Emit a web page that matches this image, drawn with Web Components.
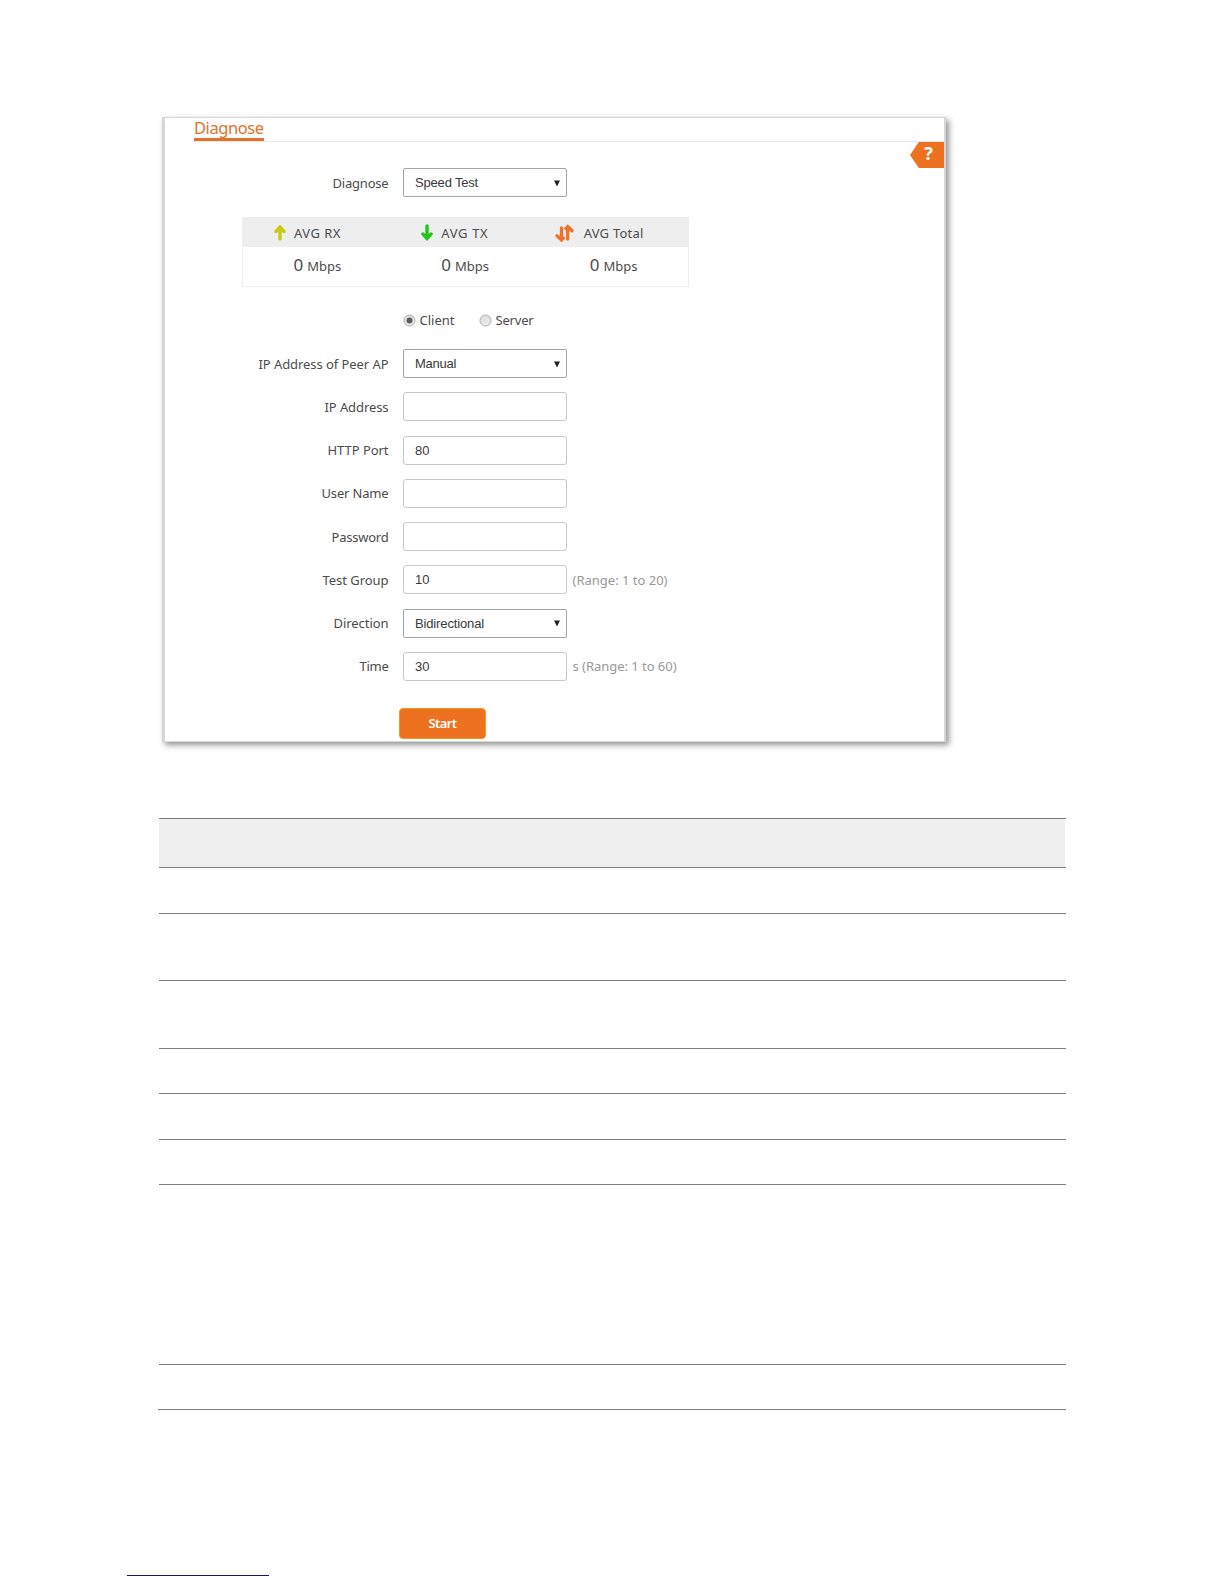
<!DOCTYPE html>
<html lang="en">
<head>
<meta charset="utf-8">
<title>Diagnose</title>
<style>
  body {
    margin: 0;
    height: 1584px;
    overflow: hidden;
    background: #fff;
    color: #4c4c4c;
    font: 13px/20px "Noto Sans", "Open Sans", sans-serif;
  }
</style>
</head>
<body>
<diagnose-page></diagnose-page>

<script>
  function attach(el, html) {
    const template = document.createElement('template');
    template.innerHTML = html;
    el.attachShadow({ mode: 'open' });
    el.shadowRoot.appendChild(template.content.cloneNode(true));
  }

  // text run tracked to a given width
  class FitText extends HTMLElement {
    connectedCallback() {
      if (this.shadowRoot) return;
      attach(this, `
        <style>
          :host { display: inline-block; white-space: nowrap; }
          span { display: inline-block; }
        </style>
        <span><slot></slot></span>
      `);
      const span = this.shadowRoot.querySelector('span');
      const width = Number(this.getAttribute('width'));
      const count = this.textContent.length;
      const natural = span.getBoundingClientRect().width;
      span.style.letterSpacing = `${(width - natural) / count}px`;
      this.style.width = `${width}px`;
    }
  }

  class PageTitle extends HTMLElement {
    connectedCallback() {
      attach(this, `
        <style>
          :host {
            display: flex;
            height: 23px;
            margin-left: 29px;
            border-bottom: 1px solid #e8e8e8;
          }
          h1 {
            box-sizing: border-box;
            margin: 0;
            height: 23px;
            border-bottom: 3px solid #e2722b;
            color: #e2722b;
            font-size: 16.5px;
            font-weight: 400;
            line-height: 20px;
          }
        </style>
        <h1><slot></slot></h1>
      `);
    }
  }

  class HelpTag extends HTMLElement {
    connectedCallback() {
      attach(this, `
        <style>
          :host {
            position: absolute;
            top: 24px;
            right: 0;
            width: 34px;
            height: 26px;
            background: #ee7120;
            clip-path: polygon(0 50%, 26% 0, 100% 0, 100% 100%, 26% 100%);
            color: #fff;
            font-size: 18px;
            font-weight: 700;
            line-height: 22px;
            text-align: center;
            text-indent: 3px;
          }
        </style>
        <slot></slot>
      `);
    }
  }

  class FormRow extends HTMLElement {
    connectedCallback() {
      attach(this, `
        <style>
          :host { display: flex; align-items: center; height: 29px; }
          .label { width: 223.5px; margin-right: 14.5px; text-align: right; }
          .hint { margin-left: 5.5px; color: #999; }
        </style>
        <div class="label"><slot name="label"></slot></div>
        <slot></slot>
        <div class="hint"><slot name="hint"></slot></div>
      `);
    }
  }

  class FieldBox extends HTMLElement {
    connectedCallback() {
      const isSelect = this.hasAttribute('select');
      attach(this, `
        <style>
          :host {
            box-sizing: border-box;
            display: flex;
            align-items: center;
            justify-content: space-between;
            width: 164px;
            height: 29px;
            padding: 1px 6px 0 11px;
            border: 1px solid ${isSelect ? '#a3a6a9' : '#c8c9ca'};
            border-radius: ${isSelect ? 2 : 3}px;
            color: #3a3a3a;
            font-family: "Liberation Sans", Arial, sans-serif;
          }
          svg { display: block; }
        </style>
        <slot></slot>
        ${isSelect ? '<svg width="6" height="7"><path d="M0 0.5h6L3 6.5z" fill="#222"/></svg>' : ''}
      `);
    }
  }

  class RadioOption extends HTMLElement {
    connectedCallback() {
      const dot = this.hasAttribute('checked') ? '<circle cx="6.5" cy="6.5" r="3" fill="#5c5c5c"/>' : '';
      attach(this, `
        <style>
          :host { display: flex; align-items: center; gap: 4px; }
          svg { display: block; }
        </style>
        <svg width="13" height="13">
          <defs>
            <linearGradient id="g" x2="0" y2="1">
              <stop stop-color="#dcdcdc"/><stop offset="1" stop-color="#ececec"/>
            </linearGradient>
          </defs>
          <circle cx="6.5" cy="6.5" r="5.5" fill="url(#g)" stroke="#adadad"/>
          ${dot}
        </svg>
        <slot></slot>
      `);
    }
  }

  const ARROWS = {
    up: `<svg width="12" height="17" viewBox="0 0 12 17"><path d="M6 15V4M2 7.4L6 3L10 7.4" fill="none" stroke="#c9c812" stroke-width="3.4" stroke-linecap="round"/></svg>`,
    down: `<svg width="12" height="17" viewBox="0 0 12 17"><path d="M6 2V13M2 10.1L6 14.5L10 10.1" fill="none" stroke="#22c41c" stroke-width="3.4" stroke-linecap="round"/></svg>`,
    both: `<svg width="19" height="18" viewBox="0 0 19 18"><path d="M6.5 4V15M2 11.8L6.5 16L8.4 14.2M12.7 15V3.5M10.8 4.6L12.7 2.6L17 6.8" fill="none" stroke="#ee7229" stroke-width="3.3" stroke-linecap="round"/></svg>`,
  };

  class StatCell extends HTMLElement {
    connectedCallback() {
      attach(this, `
        <style>
          :host { display: block; width: 148.5px; }
          .head { box-sizing: border-box; display: flex; align-items: center; height: 30px; padding-top: 1px; background: #eee; }
          .icon { display: flex; justify-content: flex-end; width: var(--icon-end); margin-right: var(--icon-gap); }
          .value {
            display: flex;
            align-items: baseline;
            gap: 4px;
            padding: 6px 0 0 calc(var(--icon-end) + var(--value-gap));
          }
          .number { font-size: 17px; line-height: 24px; }
        </style>
        <div class="head">
          <div class="icon">${ARROWS[this.getAttribute('arrow')]}</div>
          <slot></slot>
        </div>
        <div class="value">
          <span class="number">0</span>
          <fit-text width="34">Mbps</fit-text>
        </div>
      `);
    }
  }

  class StatTable extends HTMLElement {
    connectedCallback() {
      attach(this, `
        <style>
          :host {
            box-sizing: border-box;
            display: flex;
            width: 447px;
            height: 70px;
            border: 1px solid #eee;
            border-top: 0;
          }
        </style>
        <slot></slot>
      `);
    }
  }

  class StartButton extends HTMLElement {
    connectedCallback() {
      attach(this, `
        <style>
          :host { display: block; }
          button {
            display: block;
            width: 87px;
            height: 31px;
            padding: 0;
            border: 1px solid #f19a1c;
            border-radius: 4px;
            background: #ee7120;
            color: #fff;
            font: 600 13px/28px "Noto Sans", "Open Sans", sans-serif;
          }
        </style>
        <button><slot></slot></button>
      `);
    }
  }

  class RuleTable extends HTMLElement {
    connectedCallback() {
      const heights = this.getAttribute('rows').split(' ');
      attach(this, `
        <style>
          :host { display: block; width: 907px; border-top: 1px solid #7d7d7d; }
          div { box-sizing: border-box; border-bottom: 1px solid #7d7d7d; }
          div:first-of-type { background: linear-gradient(#f0f0f0, #f0f0f0) 0 0 / 906px 100% no-repeat; }
          div:last-of-type { margin-left: -1px; }
        </style>
        ${heights.map((h) => `<div style="height: ${h}px"></div>`).join('')}
      `);
    }
  }

  class DiagnosePage extends HTMLElement {
    connectedCallback() {
      attach(this, `
        <style>
          :host { display: block; }
          .panel {
            position: relative;
            box-sizing: border-box;
            width: 784px;
            height: 625px;
            margin: 117px 0 0 162px;
            border: solid #d6d6d6;
            border-width: 1px 2px 1px 3px;
            background: #fff;
            box-shadow: 3px 3px 6px rgba(0, 0, 0, .42);
          }
          .first { margin-top: 26px; }
          stat-table { margin: 20px 0 0 77px; }
          .radios { display: flex; gap: 24px; margin: 23px 0 0 237.5px; height: 20px; }
          .rows { display: flex; flex-direction: column; gap: 14.25px; margin-top: 19px; }
          start-button { margin: 27px 0 0 234px; }
          rule-table { margin: 76px 0 0 159px; }
          .footer-line { width: 142px; height: 1px; margin: 165px 0 0 127px; background: #14147c; }
        </style>
        <div class="panel">
          <page-title><fit-text width="69.5">Diagnose</fit-text></page-title>
          <help-tag>?</help-tag>
          <form-row class="first">
            <fit-text slot="label" width="56">Diagnose</fit-text>
            <field-box select><fit-text width="63">Speed Test</fit-text></field-box>
          </form-row>
          <stat-table>
            <stat-cell arrow="up" style="--icon-end: 43px; --icon-gap: 8px; --value-gap: 7.5px"><fit-text width="47">AVG RX</fit-text></stat-cell>
            <stat-cell arrow="down" style="--icon-end: 42px; --icon-gap: 8px; --value-gap: 8px"><fit-text width="47">AVG TX</fit-text></stat-cell>
            <stat-cell arrow="both" style="--icon-end: 34px; --icon-gap: 10px; --value-gap: 16px"><fit-text width="60">AVG Total</fit-text></stat-cell>
          </stat-table>
          <div class="radios">
            <radio-option checked><fit-text width="35">Client</fit-text></radio-option>
            <radio-option><fit-text width="38">Server</fit-text></radio-option>
          </div>
          <div class="rows">
            <form-row>
              <fit-text slot="label" width="130">IP Address of Peer AP</fit-text>
              <field-box select><fit-text width="41">Manual</fit-text></field-box>
            </form-row>
            <form-row>
              <fit-text slot="label" width="64">IP Address</fit-text>
              <field-box></field-box>
            </form-row>
            <form-row>
              <fit-text slot="label" width="61">HTTP Port</fit-text>
              <field-box>80</field-box>
            </form-row>
            <form-row>
              <fit-text slot="label" width="67">User Name</fit-text>
              <field-box></field-box>
            </form-row>
            <form-row>
              <fit-text slot="label" width="57">Password</fit-text>
              <field-box></field-box>
            </form-row>
            <form-row>
              <fit-text slot="label" width="66">Test Group</fit-text>
              <field-box>10</field-box>
              <fit-text slot="hint" width="95">(Range: 1 to 20)</fit-text>
            </form-row>
            <form-row>
              <fit-text slot="label" width="55">Direction</fit-text>
              <field-box select><fit-text width="69">Bidirectional</fit-text></field-box>
            </form-row>
            <form-row>
              <fit-text slot="label" width="29">Time</fit-text>
              <field-box>30</field-box>
              <fit-text slot="hint" width="104">s (Range: 1 to 60)</fit-text>
            </form-row>
          </div>
          <start-button><fit-text width="28">Start</fit-text></start-button>
        </div>
        <rule-table rows="49 46 67 68 45 46 45 180 45"></rule-table>
        <div class="footer-line"></div>
      `);
    }
  }

  customElements.define('page-title', PageTitle);
  customElements.define('help-tag', HelpTag);
  customElements.define('form-row', FormRow);
  customElements.define('field-box', FieldBox);
  customElements.define('radio-option', RadioOption);
  customElements.define('stat-cell', StatCell);
  customElements.define('stat-table', StatTable);
  customElements.define('start-button', StartButton);
  customElements.define('rule-table', RuleTable);
  customElements.define('diagnose-page', DiagnosePage);
  // last, so every parent style is in place when the text is measured
  customElements.define('fit-text', FitText);
</script>
</body>
</html>
